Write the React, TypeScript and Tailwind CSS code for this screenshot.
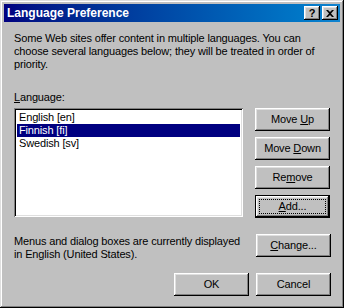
const raised =
  "shadow-[inset_-1px_-1px_#000,inset_1px_1px_#fff,inset_-2px_-2px_#808080,inset_2px_2px_#dfdfdf]";

function Btn({
  children,
  focused,
  className = "",
}: {
  children: React.ReactNode;
  focused?: boolean;
  className?: string;
}) {
  if (focused) {
    return (
      <div className={`w-[75px] h-[23px] border border-black ${className}`}>
        <div className={`h-full w-full bg-[#c0c0c0] ${raised} flex items-center justify-center p-[3px]`}>
          <div className="h-full w-full border border-dotted border-black flex items-center justify-center">
            {children}
          </div>
        </div>
      </div>
    );
  }
  return (
    <div className={`w-[75px] h-[23px] bg-[#c0c0c0] ${raised} flex items-center justify-center ${className}`}>
      {children}
    </div>
  );
}

function TitleBtn({ children }: { children: React.ReactNode }) {
  return (
    <div className={`w-[16px] h-[14px] bg-[#c0c0c0] ${raised} flex items-center justify-center text-[11px] font-bold leading-none text-black`}>
      {children}
    </div>
  );
}

export default function App() {
  const items = ["English [en]", "Finnish [fi]", "Swedish [sv]"];
  return (
    <div
      className="w-[344px] h-[308px] bg-[#c0c0c0] p-[3px] text-black text-[11px] leading-[13px] tracking-[-0.15px] shadow-[inset_-1px_-1px_#000,inset_1px_1px_#dfdfdf,inset_-2px_-2px_#808080,inset_2px_2px_#fff] flex flex-col"
      style={{ fontFamily: '"Liberation Sans", Arial, sans-serif' }}
    >
      <div className="mx-[1px] mt-[1px] h-[18px] bg-gradient-to-r from-[#000080] to-[#1084d0] flex items-center pl-[3px] pr-[2px] tracking-normal">
        <span className="text-white font-bold text-[12px] flex-1">Language Preference</span>
        <div className="flex gap-[2px]">
          <TitleBtn>?</TitleBtn>
          <TitleBtn>
            <svg width="8" height="7" viewBox="0 0 8 7">
              <path d="M0 0h2l2 2 2-2h2L5 3.5 8 7H6L4 5 2 7H0l3-3.5z" fill="#000" />
            </svg>
          </TitleBtn>
        </div>
      </div>

      <div className="flex-1 flex flex-col pl-[11px] pr-[10px]">
        <p className="mt-[10px]">
          Some Web sites offer content in multiple languages. You can
          <br />
          choose several languages below; they will be treated in order of
          <br />
          priority.
        </p>

        <div className="mt-[20px]">
          <u className="underline-offset-1">L</u>anguage:
        </div>

        <div className="mt-[4px] flex gap-[12px]">
          <div className="w-[229px] h-[109px] bg-white p-[2px] shadow-[inset_1px_1px_#808080,inset_-1px_-1px_#fff,inset_2px_2px_#000,inset_-2px_-2px_#dfdfdf]">
            <div className="pt-[1px] pl-[1px] pr-[1px]">
              {items.map((it, i) => (
                <div
                  key={it}
                  className={`h-[13px] pl-[2px] ${i === 1 ? "bg-[#000080] text-white" : ""}`}
                >
                  {it}
                </div>
              ))}
            </div>
          </div>

          <div className="flex flex-col gap-[6px]">
            <Btn>
              <span>
                Move <u className="underline-offset-1">U</u>p
              </span>
            </Btn>
            <Btn>
              <span>
                Move <u className="underline-offset-1">D</u>own
              </span>
            </Btn>
            <Btn>
              <span>
                Re<u className="underline-offset-1">m</u>ove
              </span>
            </Btn>
            <Btn focused>
              <span>
                <u className="underline-offset-1">A</u>dd...
              </span>
            </Btn>
          </div>
        </div>

        <div className="mt-[16px] flex justify-between items-start">
          <p className="mt-[1px]">
            Menus and dialog boxes are currently displayed
            <br />
            in English (United States).
          </p>
          <Btn>
            <span>
              <u className="underline-offset-1">C</u>hange...
            </span>
          </Btn>
        </div>

        <div className="mt-[12px] flex justify-end gap-[7px]">
          <Btn>OK</Btn>
          <Btn>Cancel</Btn>
        </div>
      </div>
    </div>
  );
}
